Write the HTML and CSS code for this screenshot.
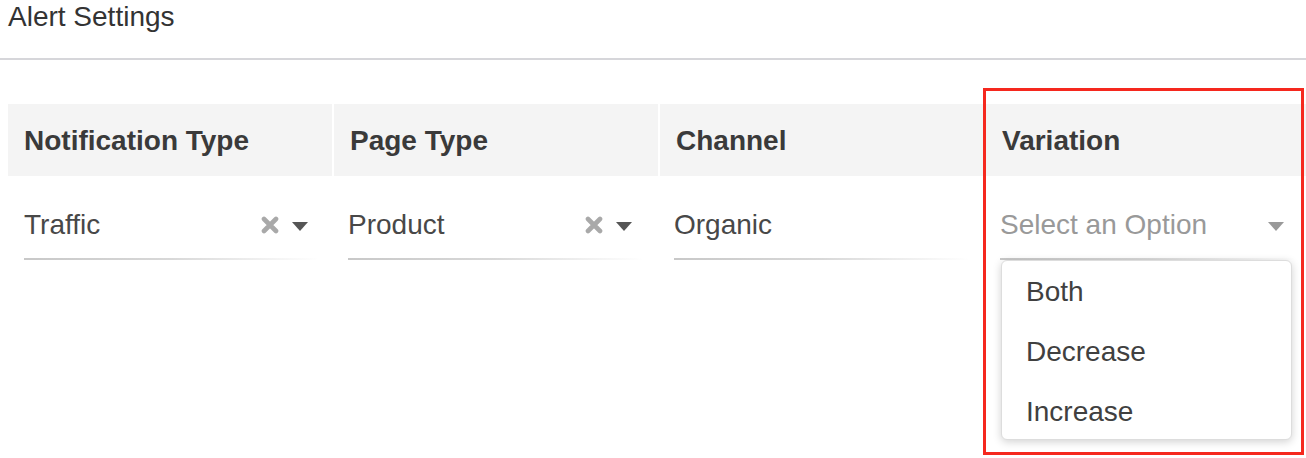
FILE: index.html
```html
<!DOCTYPE html>
<html>
<head>
<meta charset="utf-8">
<link rel="stylesheet" href="styles.css">
</head>
<body>
<div class="page-header"><h1 class="title">Alert Settings</h1></div>
<div class="table">
  <div class="col">
    <div class="th">Notification Type</div>
    <div class="td">
      <div class="select">
        <span class="value">Traffic</span>
        <svg class="clear" width="18" height="18" viewBox="0 0 18 18"><path d="M3 3 L15 15 M15 3 L3 15" stroke="#a9a9a9" stroke-width="4.6" stroke-linecap="round"/></svg>
        <span class="caret"></span>
      </div>
    </div>
  </div>
  <div class="col">
    <div class="th">Page Type</div>
    <div class="td">
      <div class="select">
        <span class="value">Product</span>
        <svg class="clear" width="18" height="18" viewBox="0 0 18 18"><path d="M3 3 L15 15 M15 3 L3 15" stroke="#a9a9a9" stroke-width="4.6" stroke-linecap="round"/></svg>
        <span class="caret"></span>
      </div>
    </div>
  </div>
  <div class="col">
    <div class="th">Channel</div>
    <div class="td">
      <div class="select">
        <span class="value">Organic</span>
      </div>
    </div>
  </div>
  <div class="col col-last">
    <div class="th">Variation</div>
    <div class="td">
      <div class="select open">
        <span class="value placeholder">Select an Option</span>
        <span class="caret light"></span>
        <ul class="menu">
          <li>Both</li>
          <li>Decrease</li>
          <li>Increase</li>
        </ul>
      </div>
    </div>
    <div class="highlight"></div>
  </div>
</div>
</body>
</html>
```

FILE: styles.css
```css
html, body {
  margin: 0;
  padding: 0;
  background: #fff;
}
body {
  min-height: 458px;
  font-family: "Liberation Sans", Arial, sans-serif;
  color: #333;
}
.page-header {
  padding: 0 8px;
  height: 58px;
  border-bottom: 2px solid #d6d6da;
}
.title {
  margin: 0;
  font-size: 28px;
  font-weight: normal;
  line-height: 34px;
  color: #333;
}
.table {
  display: flex;
  margin: 44px 0 0 8px;
}
.col {
  width: 324px;
  flex: none;
  margin-right: 2px;
  position: relative;
}
.col-last {
  width: 320px;
  margin-right: 0;
}
.th {
  background: #f4f4f4;
  height: 72px;
  display: flex;
  align-items: center;
  padding: 2px 16px 0 16px;
  box-sizing: border-box;
  font-weight: bold;
  font-size: 28px;
  color: #3a3a3a;
}
.td {
  padding: 20px 16px 0 16px;
}
.col + .col .td {
  padding-left: 14px;
}
.select {
  position: relative;
  display: flex;
  align-items: center;
  height: 64px;
  width: 294px;
  box-sizing: border-box;
  padding-right: 10px;
  font-size: 28px;
  color: #484848;
  border-bottom: 2px solid transparent;
  border-image: linear-gradient(to right, #c8c8c8 0%, #d8d8d8 50%, rgba(230,230,230,0) 100%) 1;
}
.value {
  flex: 1;
  padding-bottom: 4px;
}
.placeholder {
  color: #999;
}
.clear {
  margin-right: 13px;
  margin-bottom: 4px;
  flex: none;
}
.caret {
  width: 0;
  height: 0;
  border-left: 8px solid transparent;
  border-right: 8px solid transparent;
  border-top: 9px solid #555;
  margin-bottom: 2px;
}
.caret.light {
  border-top-color: #999;
}
.menu {
  position: absolute;
  top: 64px;
  left: 1px;
  width: 291px;
  margin: 0;
  padding: 1px 0 0 0;
  list-style: none;
  background: #fff;
  border: 1px solid #ddd;
  border-radius: 6px;
  box-shadow: 0 2px 8px rgba(0,0,0,0.18);
  box-sizing: border-box;
  height: 180px;
}
.menu li {
  height: 60px;
  line-height: 60px;
  padding-left: 24px;
  font-size: 28px;
  color: #404040;
}
.highlight {
  position: absolute;
  left: -3px;
  top: -16px;
  width: 321px;
  height: 367px;
  border: 3px solid #f5281e;
  box-sizing: border-box;
  pointer-events: none;
}
```
